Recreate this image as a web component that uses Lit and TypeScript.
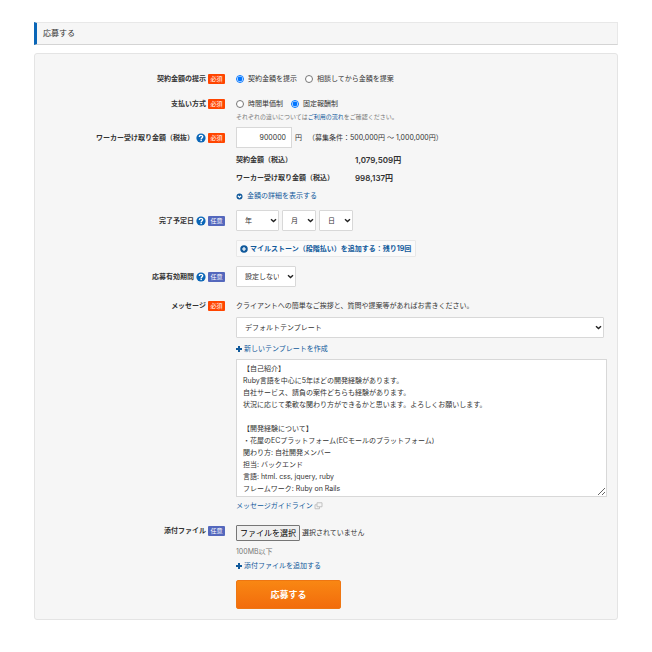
import { LitElement, html, css, svg, TemplateResult } from "lit";
import { customElement, property, state } from "lit/decorators.js";

const baseText = css`
  * {
    box-sizing: border-box;
  }
  button,
  input,
  select,
  textarea {
    font: inherit;
    color: inherit;
    margin: 0;
  }
  a {
    color: #10599b;
    text-decoration: none;
  }
`;

const plusIcon = svg`<path d="M3 1h2v2h2v2h-2v2h-2v-2h-2v-2h2z" fill="#10599b"/>`;

@customElement("form-row")
export class FormRow extends LitElement {
  @property() label = "";
  @property() target = "";
  @property({ type: Boolean }) required = false;
  @property({ type: Boolean }) help = false;

  static styles = [
    baseText,
    css`
      :host {
        display: grid;
        grid-template-columns: 180px minmax(0, 1fr);
        column-gap: 11px;
      }
      .head {
        display: flex;
        justify-content: flex-end;
        align-items: center;
        align-self: start;
        gap: 2px;
        height: var(--head-height, 14px);
      }
      .label {
        font-weight: 700;
        color: #333;
        white-space: nowrap;
      }
      .badge {
        width: 17px;
        height: 10px;
        border-radius: 1px;
        background: #5468bd;
        color: #fff;
        font-size: 6px;
        line-height: 10px;
        text-align: center;
      }
      .badge.required {
        background: #ff4500;
      }
      .help {
        display: flex;
        padding: 0;
        border: 0;
        background: none;
      }
    `,
  ];

  render() {
    return html`
      <div class="head">
        <label class="label" for=${this.target} @click=${this.focusField}>${this.label}</label>
        ${this.help
          ? html`<button class="help" type="button" aria-label="ヘルプ">
              <svg width="10" height="10" viewBox="0 0 20 20">
                <circle cx="10" cy="10" r="9.2" fill="#0a66b7" />
                <path
                  d="M6.6 8C6.6 3.8 13.4 3.9 13.4 7.6C13.4 9.8 10.3 9.6 10.3 12.3"
                  fill="none"
                  stroke="#fff"
                  stroke-width="2.8"
                />
                <rect x="8.9" y="13.4" width="2.8" height="2.8" fill="#fff" />
              </svg>
            </button>`
          : ""}
        <span class="badge ${this.required ? "required" : ""}">${this.required ? "必須" : "任意"}</span>
      </div>
      <slot></slot>
    `;
  }

  private focusField() {
    this.querySelector<HTMLElement>("input, select, textarea")?.focus();
  }
}

@customElement("app-root")
export class AppRoot extends LitElement {
  @state() private message = [
    "【自己紹介】",
    "Ruby言語を中心に5年ほどの開発経験があります。",
    "自社サービス、請負の案件どちらも経験があります。",
    "状況に応じて柔軟な関わり方ができるかと思います。よろしくお願いします。",
    "",
    "【開発経験について】",
    "・花屋のECプラットフォーム(ECモールのプラットフォーム)",
    "関わり方: 自社開発メンバー",
    "担当: バックエンド",
    "言語: html. css, jquery, ruby",
    "フレームワーク: Ruby on Rails",
  ].join("\n");

  static styles = [
    baseText,
    css`
      :host {
        display: block;
        padding: 22px 34px 32px;
        background: #fff;
        color: #333;
        font: 7px/14px Inter, "Noto Sans CJK JP", sans-serif;
      }
      .title {
        margin: 0 0 8px;
        padding: 0 6px;
        border: 1px solid #e8e8e8;
        border-bottom-color: #d4d4d4;
        border-left: 3px solid #0a66b7;
        background: #f6f6f6;
        font-size: 8px;
        font-weight: 400;
        line-height: 21px;
      }
      .panel {
        padding: 18px 10px 10px;
        border: 1px solid #e4e4e4;
        border-radius: 3px;
        background: #f6f6f6;
      }
      .row {
        margin-bottom: 11px;
      }
      .row.tight {
        margin-bottom: 5px;
      }
      .row.field {
        --head-height: 21px;
      }
      .row.dates {
        margin-bottom: 9px;
      }
      .row.wide {
        margin-bottom: 12px;
      }
      .stack {
        display: flex;
        flex-direction: column;
        align-items: flex-start;
      }
      .line {
        display: flex;
        align-items: center;
      }
      .choices {
        gap: 8px;
      }
      .choice {
        display: flex;
        align-items: center;
        gap: 4px;
      }
      .choice input {
        width: 8px;
        height: 8px;
        accent-color: #0075ff;
      }
      .note {
        color: #777;
        font-size: 6px;
        line-height: 11px;
      }
      .amount {
        width: 56px;
        height: 21px;
        padding: 0 5px;
        border: 1px solid #d8d8d8;
        background: #fff;
        text-align: right;
      }
      .unit {
        margin: 0 6px 0 3px;
      }
      .totals {
        display: grid;
        grid-template-columns: 119px auto;
        margin: 3px 0 0;
        font-weight: 700;
        line-height: 18px;
      }
      .totals dd {
        margin: 0;
        font-size: 8px;
        font-weight: 600;
      }
      .detail {
        display: flex;
        align-items: center;
        gap: 4px;
        line-height: 18px;
      }
      .selects {
        gap: 3px;
      }
      .select {
        display: grid;
        align-items: center;
      }
      .select select,
      .select svg {
        grid-area: 1 / 1;
      }
      .select svg {
        justify-self: end;
        margin-right: 2px;
        pointer-events: none;
      }
      .select select {
        appearance: none;
        width: 100%;
        height: 21px;
        padding: 0 16px 0 8px;
        border: 1px solid #d8d8d8;
        border-radius: 1px;
        background: #fff;
      }
      .year {
        width: 43px;
      }
      .day {
        width: 34px;
      }
      .period {
        width: 60px;
      }
      .template {
        align-self: stretch;
        margin: 4px 3px 4px 0;
      }
      .milestone {
        display: flex;
        align-items: center;
        gap: 2px;
        height: 17px;
        margin-top: 9px;
        padding: 0 4px 0 3px;
        border: 1px solid #e8e8e8;
        border-radius: 1px;
        background: #fafafa;
        color: #10599b;
        font-weight: 700;
      }
      .add {
        display: flex;
        align-items: center;
      }
      .message {
        width: 100%;
        height: 138px;
        margin: 3px 0 2px;
        padding: 3px 6px;
        border: 1px solid #d8d8d8;
        background: #fff;
        line-height: 12px;
        resize: both;
      }
      .external {
        display: flex;
        align-items: center;
        gap: 1px;
      }
      .file {
        gap: 2px;
        margin-top: 1px;
      }
      .file input {
        position: absolute;
        width: 1px;
        height: 1px;
        opacity: 0;
      }
      .choose {
        padding: 0 3px;
        border: 1px solid #767676;
        border-radius: 1px;
        background: #efefef;
        color: #000;
        font-size: 8px;
        line-height: 14px;
      }
      .limit {
        margin-top: 4px;
        color: #777;
      }
      .submit {
        width: 105px;
        height: 29px;
        margin: 7px 0 0;
        padding: 0;
        border: 1px solid #ee7612;
        border-radius: 2px;
        background: linear-gradient(#f98713, #f26c0c);
        color: #fff;
        font-size: 9px;
        font-weight: 700;
      }
      .row.last {
        margin-bottom: 0;
      }
    `,
  ];

  private choice(id: string, name: string, text: string, checked = false): TemplateResult {
    return html`<label class="choice" for=${id}>
      <input type="radio" id=${id} name=${name} .checked=${checked} />${text}
    </label>`;
  }

  private select(id: string, kind: string, text: string): TemplateResult {
    return html`<div class="select ${kind}">
      <select id=${id} aria-label=${text}>
        <option>${text}</option>
      </select>
      <svg width="7" height="5" viewBox="0 0 7 5">
        <path d="M1 1.2L3.5 3.6L6 1.2" fill="none" stroke="#222" stroke-width="1.4" />
      </svg>
    </div>`;
  }

  private addLink(text: string): TemplateResult {
    return html`<a class="add" href="#">
      <svg width="8" height="8" viewBox="1 0 8 8">${plusIcon}</svg>${text}
    </a>`;
  }

  render() {
    return html`
      <h1 class="title">応募する</h1>
      <form class="panel" @submit=${(e: Event) => e.preventDefault()}>
        <form-row class="row" label="契約金額の提示" target="offer" required>
          <div class="line choices">
            ${this.choice("offer", "offer", "契約金額を提示", true)}
            ${this.choice("consult", "offer", "相談してから金額を提案")}
          </div>
        </form-row>

        <form-row class="row tight" label="支払い方式" target="hourly" required>
          <div class="stack">
            <div class="line choices">
              ${this.choice("hourly", "payment", "時間単価制")}
              ${this.choice("fixed", "payment", "固定報酬制", true)}
            </div>
            <div class="note">それぞれの違いについては<a href="#">ご利用の流れ</a>をご確認ください。</div>
          </div>
        </form-row>

        <form-row class="row field tight" label="ワーカー受け取り金額（税抜）" target="amount" required help>
          <div class="stack">
            <div class="line">
              <input class="amount" id="amount" type="text" value="900000" aria-label="ワーカー受け取り金額（税抜）" />
              <span class="unit">円</span>
              <span>（募集条件：500,000円 〜 1,000,000円）</span>
            </div>
            <dl class="totals">
              <dt>契約金額（税込）</dt>
              <dd>1,079,509円</dd>
              <dt>ワーカー受け取り金額（税込）</dt>
              <dd>998,137円</dd>
            </dl>
            <a class="detail" href="#">
              <svg width="7" height="7" viewBox="0 0 14 14">
                <circle cx="7" cy="7" r="6" fill="#10599b" />
                <path d="M3.8 5.5L7 8.7L10.2 5.5" fill="none" stroke="#fff" stroke-width="2.2" />
              </svg>
              金額の詳細を表示する
            </a>
          </div>
        </form-row>

        <form-row class="row field dates" label="完了予定日" target="year" help>
          <div class="stack">
            <div class="line selects">
              ${this.select("year", "year", "年")} ${this.select("month", "day", "月")}
              ${this.select("day", "day", "日")}
            </div>
            <button class="milestone" type="button">
              <svg width="8" height="8" viewBox="0 0 16 16">
                <circle cx="8" cy="8" r="7.5" fill="#10599b" />
                <path d="M8 4V12M4 8H12" stroke="#fff" stroke-width="2.4" />
              </svg>
              マイルストーン（段階払い）を追加する：残り19回
            </button>
          </div>
        </form-row>

        <form-row class="row field wide" label="応募有効期間" target="period" help>
          <div class="stack">${this.select("period", "period", "設定しない")}</div>
        </form-row>

        <form-row class="row" label="メッセージ" target="message" required>
          <div class="stack">
            <div>クライアントへの簡単なご挨拶と、質問や提案等があればお書きください。</div>
            ${this.select("template", "template", "デフォルトテンプレート")}
            ${this.addLink("新しいテンプレートを作成")}
            <textarea class="message" id="message" aria-label="メッセージ" .value=${this.message}></textarea>
            <a class="external" href="#">
              メッセージガイドライン
              <svg width="9" height="8" viewBox="0 0 18 16">
                <path d="M6 1.5H16V9.5H6ZM5.5 5.5H2V13.5H11V10" fill="none" stroke="#b5b5b5" stroke-width="1.6" />
              </svg>
            </a>
          </div>
        </form-row>

        <form-row class="row last" label="添付ファイル" target="file">
          <div class="stack">
            <div class="line file">
              <input id="file" type="file" />
              <label class="choose" for="file">ファイルを選択</label>
              <span>選択されていません</span>
            </div>
            <div class="limit">100MB以下</div>
            ${this.addLink("添付ファイルを追加する")}
            <button class="submit" type="submit">応募する</button>
          </div>
        </form-row>
      </form>
    `;
  }
}
